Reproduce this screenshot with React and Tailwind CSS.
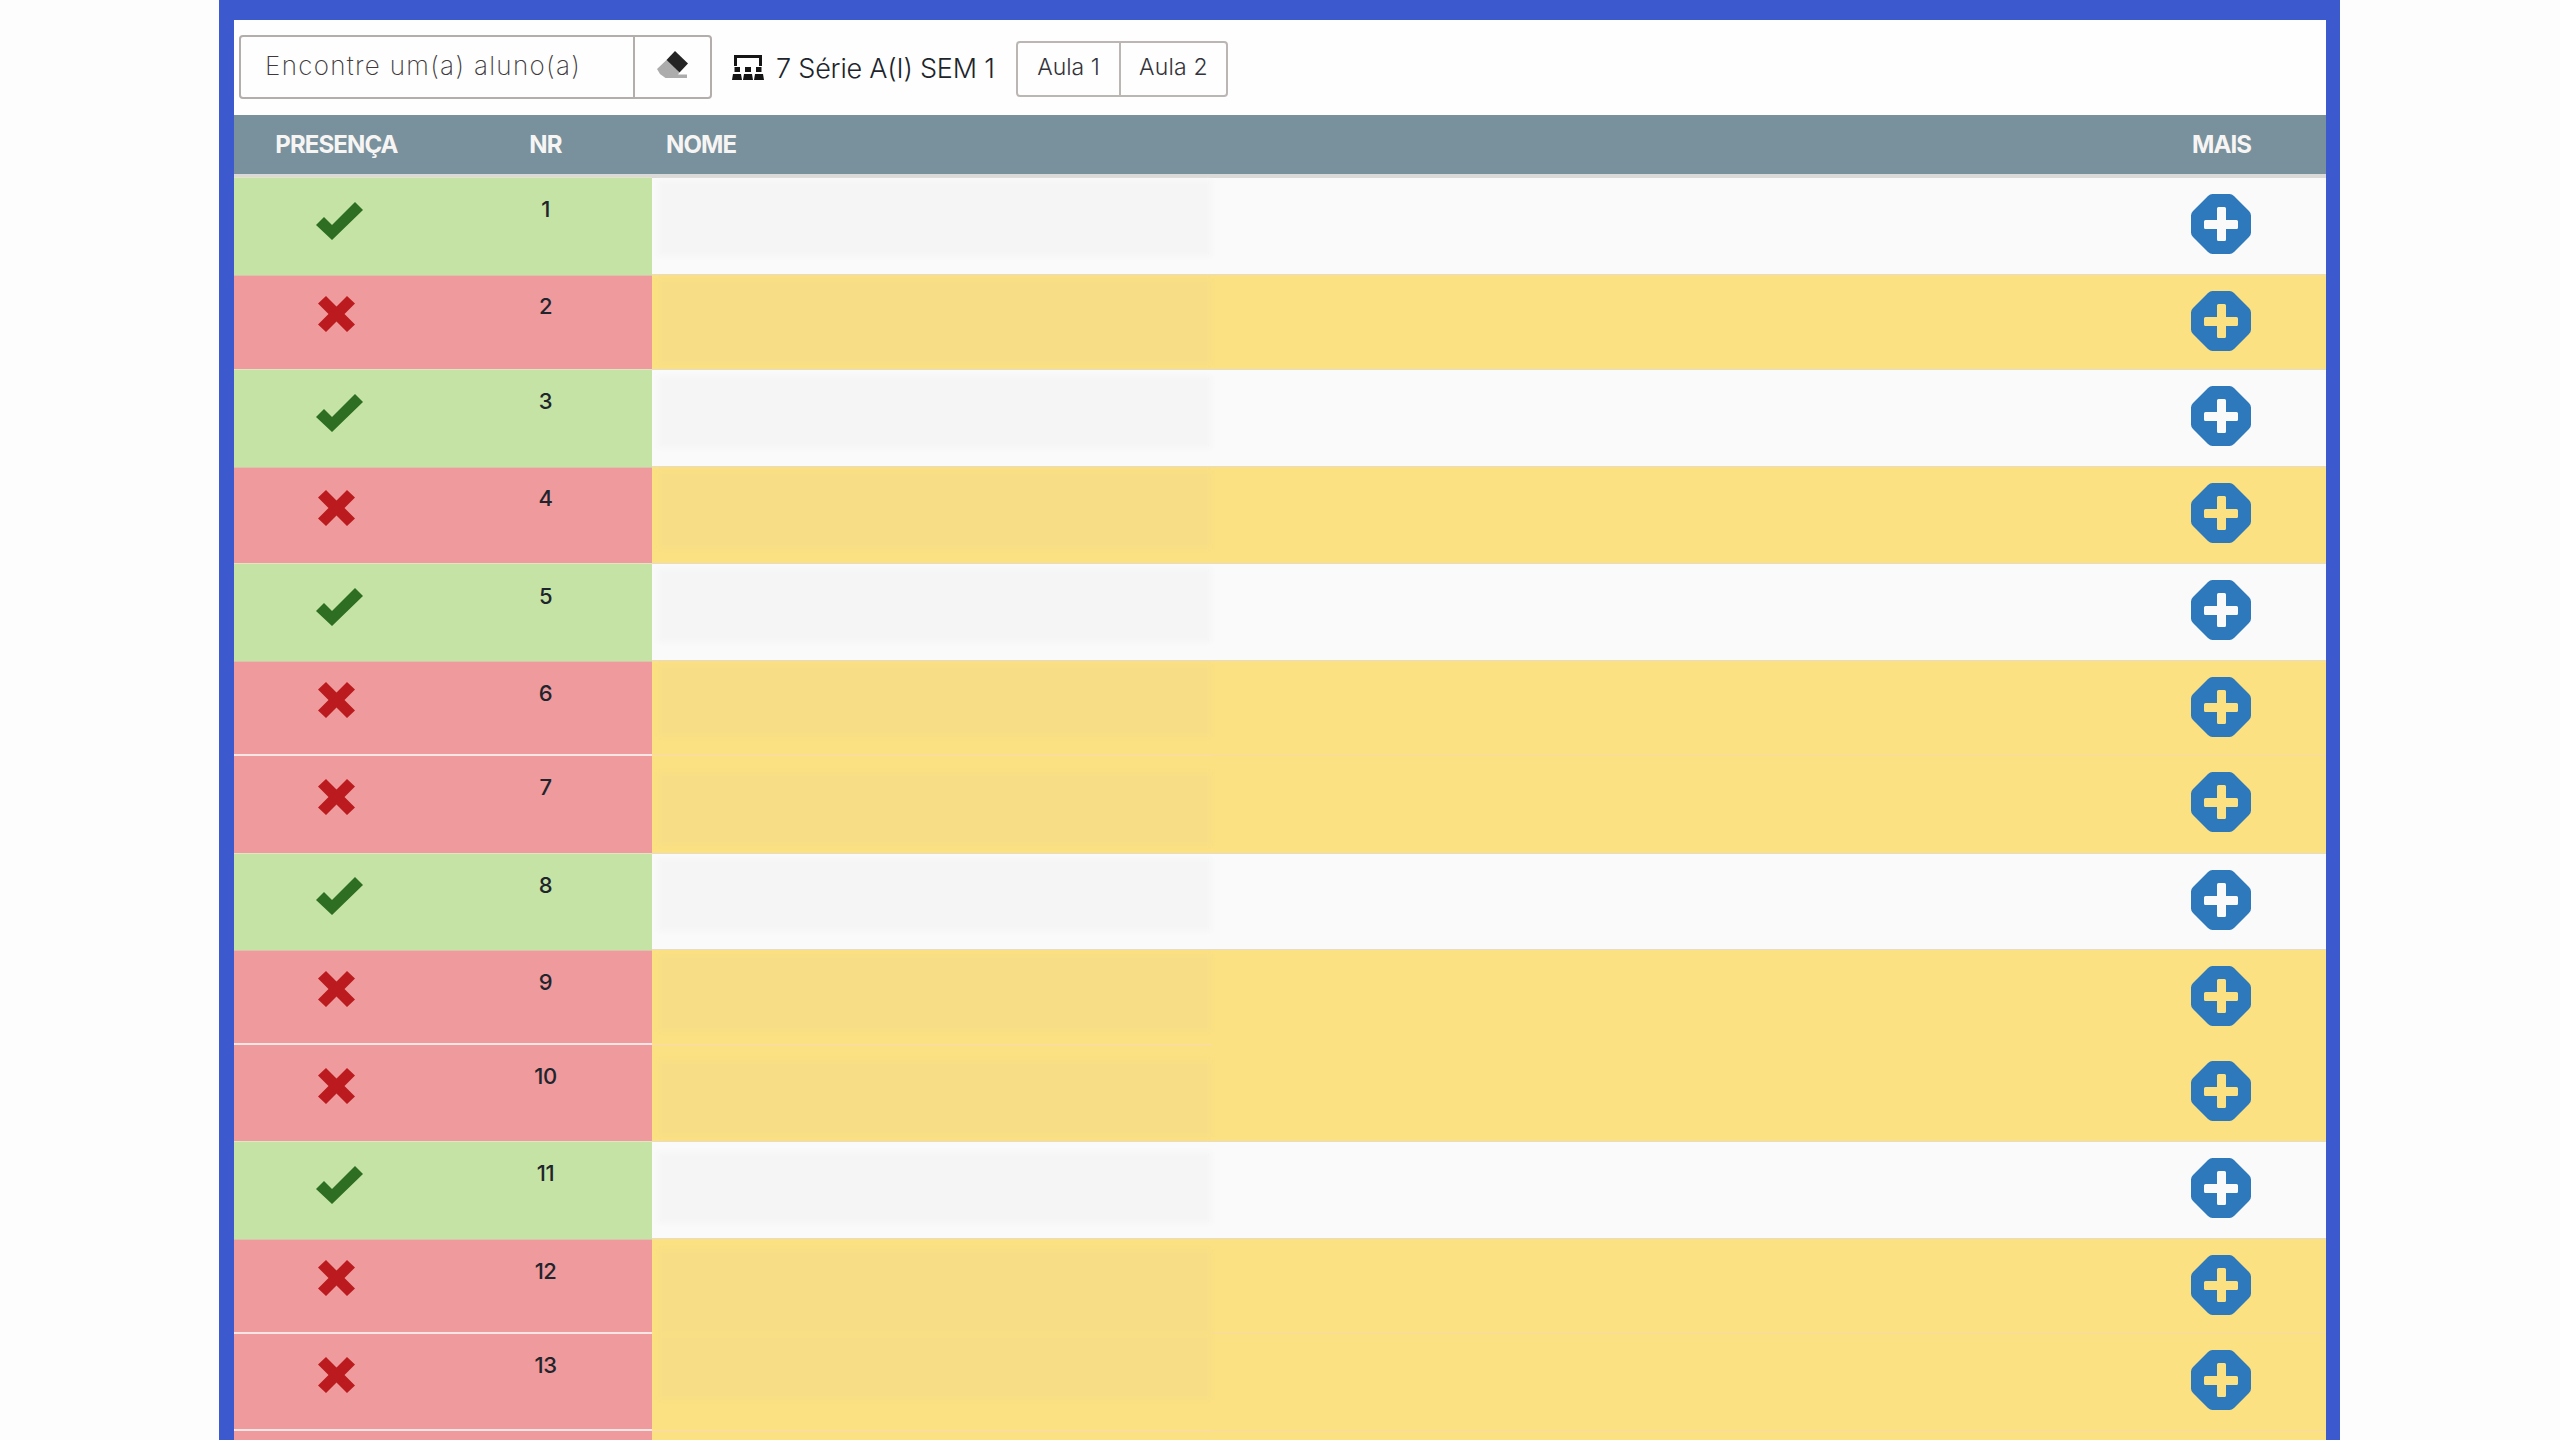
const ROWS = [
  { n: 1, present: true, h: 97, markTop: 24, numTop: 23, patch: [2, 78] },
  { n: 2, present: false, h: 95, markTop: 21, numTop: 23, patch: [3, 90] },
  { n: 3, present: true, h: 97, markTop: 24, numTop: 23, patch: [6, 78] },
  { n: 4, present: false, h: 97, markTop: 23, numTop: 23, patch: [3, 82] },
  { n: 5, present: true, h: 97, markTop: 24, numTop: 24, patch: [4, 78] },
  { n: 6, present: false, h: 95, markTop: 21, numTop: 24, patch: [3, 76] },
  { n: 7, present: false, h: 98, markTop: 23, numTop: 23, patch: [16, 90] },
  { n: 8, present: true, h: 96, markTop: 23, numTop: 23, patch: [4, 77] },
  { n: 9, present: false, h: 95, markTop: 21, numTop: 24, patch: [4, 82] },
  { n: 10, present: false, h: 97, markTop: 23, numTop: 23, patch: [15, 92] },
  { n: 11, present: true, h: 97, markTop: 24, numTop: 23, patch: [10, 81] },
  { n: 12, present: false, h: 95, markTop: 21, numTop: 24, patch: [10, 95] },
  { n: 13, present: false, h: 97, markTop: 23, numTop: 23, patch: [0, 66] },
  { n: "", present: false, h: 20, markTop: 23, numTop: 23, patch: null },
];

function Check() {
  return (
    <svg className="block h-[38px] w-[47px]" viewBox="0 0 47 38">
      <path d="M0 23 8 15 16 23 39 0 47 8 16 38Z" fill="#2d6e22" />
    </svg>
  );
}

function Cross() {
  return (
    <svg className="block h-9 w-[37px]" viewBox="0 0 37 36">
      <path d="M8 0 18.5 10.500 29 0 37 7.500 26.500 18 37 28.500 29 36 18.500 25.500 8 36 0 28.500 10.500 18 0 7.500Z" fill="#bb1b1e" />
    </svg>
  );
}

function Plus() {
  return (
    <svg className="block size-[60px]" viewBox="0 0 60 60">
      <path
        fillRule="evenodd"
        fill="#2d79bb"
        d="M21.500 0H38.500Q41 0 43 2L58 17Q60 19 60 21.500V38.500Q60 41 58 43L43 58Q41 60 38.500 60H21.500Q19 60 17 58L2 43Q0 41 0 38.500V21.500Q0 19 2 17L17 2Q19 0 21.500 0ZM27.500 13Q26 13 26 14.500V26H14.500Q13 26 13 27.500V33.500Q13 35 14.500 35H26V45.500Q26 47 27.500 47H33.500Q35 47 35 45.500V35H45.500Q47 35 47 33.500V27.500Q47 26 45.500 26H35V14.500Q35 13 33.500 13Z"
      />
    </svg>
  );
}

function Row({ row, next }) {
  const redPair = !row.present && next && !next.present;
  const name = row.present ? "bg-[#fafafb]" : "bg-[#fce182]";
  const patch = row.present ? "bg-[#f5f5f5]" : "bg-[#f7de86]";
  const status = row.present
    ? "relative -my-px border-y border-t-[#e0e6c4] border-b-[#dcc3ae] bg-[#c5e3a4]"
    : "bg-[#ef9a9c]";
  const pair = redPair ? "border-b-2 border-[#fae6e4]" : "";
  const nameEdge = row.n === 12 ? "" : redPair ? "border-b border-[#fbd9b4]" : "border-b border-[#e6dcc8]";
  const restEdge = row.n === 9 ? "" : redPair ? "border-b border-[#fbd9a6]" : "border-b border-[#e6dcc8]";
  return (
    <div className="flex shrink-0" style={{ height: row.h }}>
      <div className={`flex w-[418px] ${status} ${pair}`}>
        <div className="w-[205px]" style={{ paddingTop: row.markTop, paddingLeft: row.present ? 82 : 84 }}>
          {row.n !== "" && (row.present ? <Check /> : <Cross />)}
        </div>
        <div
          className="w-[213px] text-center text-[22px] leading-4 font-medium tracking-[-0.5px] text-[#20242c]"
          style={{ paddingTop: row.numTop }}
        >
          {row.n}
        </div>
      </div>
      <div className={`flex flex-1 ${name}`}>
        <div className={`w-[560px] ${nameEdge}`} style={{ paddingTop: row.patch ? row.patch[0] : 0 }}>
          {row.patch && (
            <div
              className={`ml-[6px] w-[553px] blur-[2px] ${patch}`}
              style={{ height: row.patch[1] - row.patch[0] }}
            />
          )}
        </div>
        <div className={`flex flex-1 justify-end ${restEdge}`}>
          <div className="w-[135px] pt-4">{row.n !== "" && <Plus />}</div>
        </div>
      </div>
    </div>
  );
}

export default function App() {
  return (
    <div className="flex h-[1440px] w-[2560px] overflow-hidden bg-[#fdfdfd] pl-[219px] font-['Inter',sans-serif]">
      <div className="flex h-full w-[2121px] flex-col overflow-hidden border-t-[20px] border-r-[14px] border-l-[15px] border-[#3c5acd] bg-[#fefefe]">
        <div className="flex h-[95px] shrink-0 items-start pt-[15px] pl-[5px]">
          <div className="flex h-[64px] w-[473px] rounded-[4px] border-2 border-[#b3adab]">
            <div className="w-[394px] border-r-2 border-[#b3adab] pl-6 text-[26px] leading-[58px] font-extralight tracking-[1.3px] whitespace-nowrap text-[#40393c]">
              Encontre um(a) aluno(a)
            </div>
            <div className="flex flex-1 justify-center pt-[14px]">
              <svg className="block h-[27px] w-[31px]" viewBox="0 0 31 27">
                <path d="M0 18 9.500 9 22.500 21.500 21 23.500H30V27H8.500L3 23Z" fill="#acacac" />
                <path d="M18 0 31 12.500 22.500 21.500 9.500 9Z" fill="#242424" />
              </svg>
            </div>
          </div>
          <svg className="mt-5 ml-5 block h-[25px] w-[32px]" viewBox="0 0 32 25" fill="#151515">
            <path d="M2 0H30V11H27V3H5V11H2ZM2.500 12H8V17H2.500ZM13 12H19V17H13ZM24 12H29.500V17H24ZM1 19H9L10 25H0ZM12 19H20L21 25H11ZM23 19H31L32 25H22Z" />
          </svg>
          <div className="mt-[14px] ml-3 w-[240px] text-[27px] leading-[40px] font-light tracking-[-0.2px] whitespace-nowrap text-[#20242c]">
            7 Série A(I) SEM 1
          </div>
          <div className="mt-[6px] flex h-[56px] w-[212px] shrink-0 rounded-[4px] border-2 border-[#bbb6b4] text-[23px] leading-[48px] font-light text-[#33333b]">
            <div className="w-[103px] border-r-2 border-[#bbb6b4] text-center">Aula 1</div>
            <div className="flex-1 text-center tracking-[0.2px]">Aula 2</div>
          </div>
        </div>
        <div className="flex h-[63px] shrink-0 border-b-4 border-[#dcdad8] bg-[#78919d] text-[24px] leading-[60px] font-bold tracking-[-0.9px] text-[#f7f5f4]">
          <div className="w-[205px] text-center">PRESENÇA</div>
          <div className="w-[213px] text-center">NR</div>
          <div className="flex-1 pl-[14px]">NOME</div>
          <div className="w-[135px] pl-px">MAIS</div>
        </div>
        {ROWS.map((row, i) => (
          <Row key={i} row={row} next={ROWS[i + 1]} />
        ))}
      </div>
    </div>
  );
}
